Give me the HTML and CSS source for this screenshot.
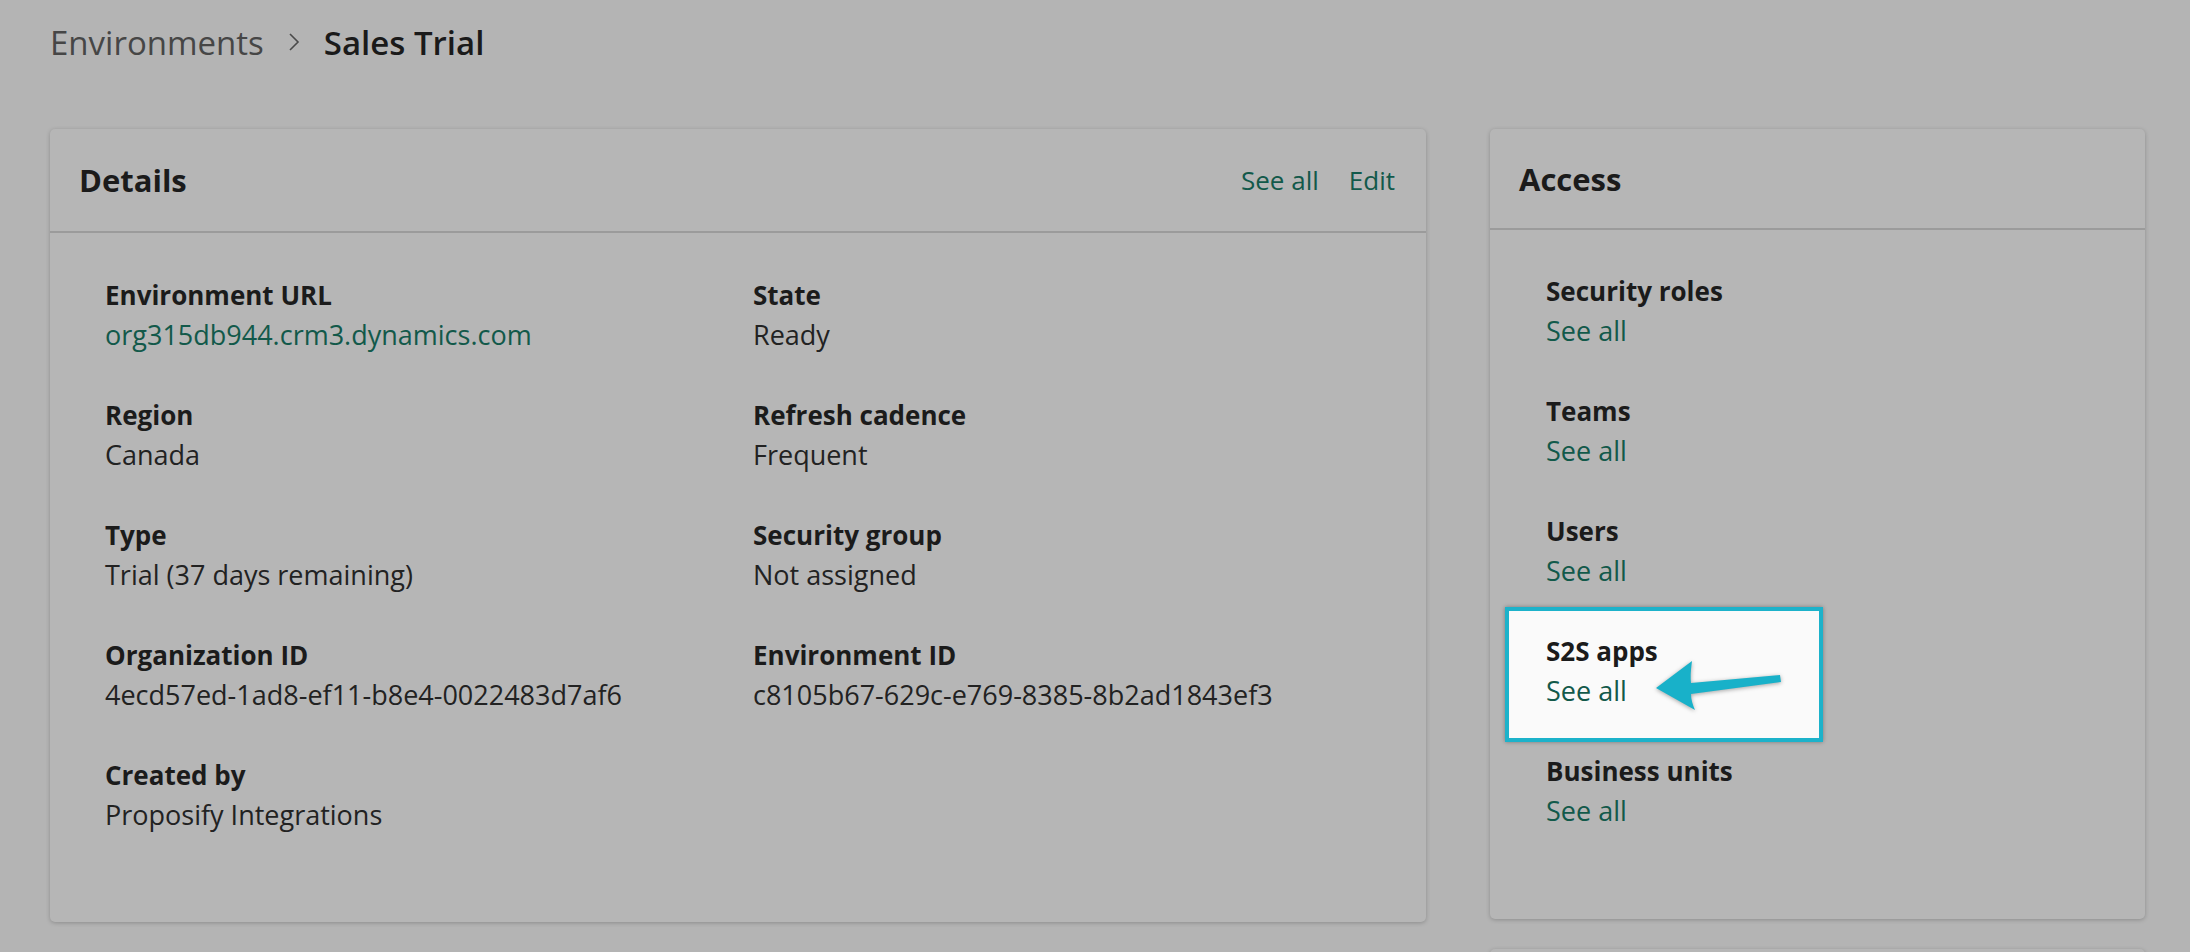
FILE: index.html
```html
<!DOCTYPE html>
<html lang="en">
<head>
  <meta charset="UTF-8">
  <title>Sales Trial</title>
  <link rel="stylesheet" href="styles.css">
</head>
<body>
  <div class="page">
    <div class="breadcrumb">
      <span class="crumb">Environments</span>
      <svg class="chevron" width="12" height="20" viewBox="0 0 12 20"><polyline points="2,2 10,10 2,18" fill="none" stroke="#4a4a4a" stroke-width="1.6"/></svg>
      <span class="current">Sales Trial</span>
    </div>

    <div class="columns">
      <div class="card details">
        <div class="card-header">
          <h2>Details</h2>
          <div class="actions">
            <a href="#">See all</a>
            <a href="#">Edit</a>
          </div>
        </div>
        <div class="details-grid">
          <div class="field">
            <div class="label">Environment URL</div>
            <a class="value link" href="#">org315db944.crm3.dynamics.com</a>
          </div>
          <div class="field">
            <div class="label">State</div>
            <div class="value">Ready</div>
          </div>
          <div class="field">
            <div class="label">Region</div>
            <div class="value">Canada</div>
          </div>
          <div class="field">
            <div class="label">Refresh cadence</div>
            <div class="value">Frequent</div>
          </div>
          <div class="field">
            <div class="label">Type</div>
            <div class="value">Trial (37 days remaining)</div>
          </div>
          <div class="field">
            <div class="label">Security group</div>
            <div class="value">Not assigned</div>
          </div>
          <div class="field">
            <div class="label">Organization ID</div>
            <div class="value">4ecd57ed-1ad8-ef11-b8e4-0022483d7af6</div>
          </div>
          <div class="field">
            <div class="label">Environment ID</div>
            <div class="value">c8105b67-629c-e769-8385-8b2ad1843ef3</div>
          </div>
          <div class="field">
            <div class="label">Created by</div>
            <div class="value">Proposify Integrations</div>
          </div>
        </div>
      </div>

      <div class="side">
        <div class="card access">
          <div class="card-header">
            <h2>Access</h2>
          </div>
          <div class="access-list">
            <div class="field">
              <div class="label">Security roles</div>
              <a class="value link" href="#">See all</a>
            </div>
            <div class="field">
              <div class="label">Teams</div>
              <a class="value link" href="#">See all</a>
            </div>
            <div class="field">
              <div class="label">Users</div>
              <a class="value link" href="#">See all</a>
            </div>
            <div class="field highlight">
              <div class="label">S2S apps</div>
              <a class="value link" href="#">See all</a>
              <svg class="arrow" width="145" height="70" viewBox="0 0 145 70">
                <path d="M11 37 L47 10 Q45 24 46 32 L135 24 L136 31 L46 43 Q46 50 50 59 Z" fill="#18b1c9"/>
              </svg>
            </div>
            <div class="field">
              <div class="label">Business units</div>
              <a class="value link" href="#">See all</a>
            </div>
          </div>
        </div>
        <div class="card next"></div>
      </div>
    </div>
  </div>
</body>
</html>
```

FILE: styles.css
```css
body {
  margin: 0;
  background-color: #b4b4b4;
  font-family: "Open Sans", "Noto Sans", sans-serif;
  color: #1c1c1c;
  height: 952px;
  overflow: hidden;
}

.page {
  padding: 0 45px 0 50px;
}

.breadcrumb {
  display: flex;
  align-items: center;
  height: 48px;
  margin-top: 18px;
  font-size: 33px;
}

.crumb {
  color: #464646;
}

.chevron {
  margin: 0 24px 0 24px;
}

.current {
  font-weight: 600;
  color: #1a1a1a;
}

.columns {
  display: flex;
  gap: 64px;
  margin-top: 63px;
  align-items: flex-start;
}

.card {
  background-color: #b6b6b6;
  border-radius: 5px;
  box-shadow: 0 1px 4px rgba(0, 0, 0, 0.22);
}

.details {
  flex: 0 0 1376px;
  height: 793px;
}

.side {
  flex: 1;
  display: flex;
  flex-direction: column;
  gap: 30px;
}

.access {
  height: 790px;
}

.next {
  height: 200px;
}

.card-header {
  display: flex;
  align-items: center;
  justify-content: space-between;
  height: 102px;
  padding: 0 31px 0 29px;
  border-bottom: 2px solid #9b9b9b;
}

.access .card-header {
  height: 99px;
}

.card-header h2 {
  margin: 0;
  font-size: 31px;
  font-weight: 700;
  color: #1b1b1b;
}

.actions {
  display: flex;
  gap: 30px;
}

.actions a,
.link {
  color: #12594a;
  text-decoration: none;
}

.actions a {
  font-size: 26px;
}

.details-grid {
  display: grid;
  grid-template-columns: 648px 1fr;
  row-gap: 40px;
  padding: 42px 55px;
}

.field {
  display: flex;
  flex-direction: column;
  font-size: 26px;
  line-height: 40px;
}

.label {
  font-weight: 700;
  color: #1b1b1b;
}

.value {
  color: #222;
  font-size: 27px;
}

.value.link {
  color: #12594a;
}

.access-list {
  display: flex;
  flex-direction: column;
  gap: 40px;
  padding: 41px 56px;
}

.highlight {
  position: relative;
}

.highlight::before {
  content: "";
  position: absolute;
  left: -41px;
  top: -24px;
  width: 310px;
  height: 127px;
  border: 4px solid #1cb2ca;
  background-color: #fafafa;
  box-shadow: 0 0 4px rgba(0, 0, 0, 0.35);
}

.highlight .label,
.highlight .value {
  position: relative;
  align-self: flex-start;
}

.arrow {
  position: absolute;
  left: 99px;
  top: 20px;
  filter: drop-shadow(0 1px 2px rgba(0, 0, 0, 0.35));
}
```
